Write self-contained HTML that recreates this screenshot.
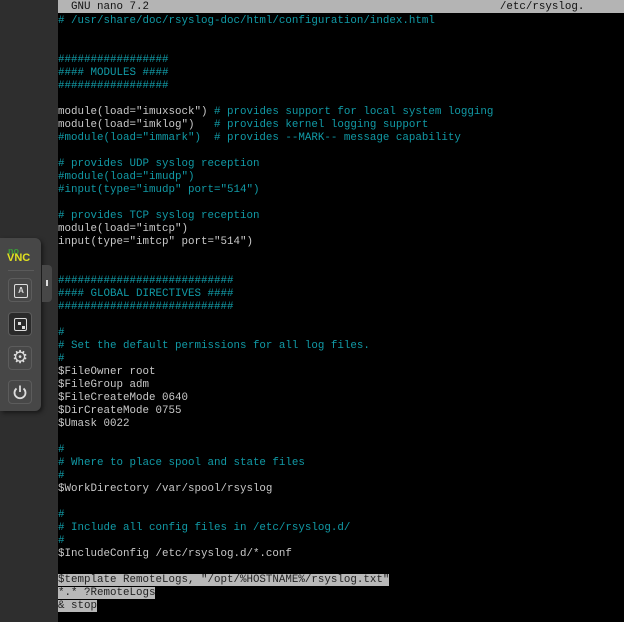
<!DOCTYPE html>
<html><head><meta charset="utf-8"><style>
html,body{margin:0;padding:0;width:624px;height:622px;overflow:hidden;background:#2e2e2e}
#term{position:absolute;left:58px;top:0;width:566px;height:622px;background:#000;}
#bar{position:absolute;left:0;top:0;width:566px;height:13px;background:#b4b4b4;color:#111;font:10.83px/14px "Liberation Mono",monospace;white-space:pre}
pre{position:absolute;left:0;top:15px;margin:0;font:10.83px/13px "Liberation Mono",monospace;color:#c9c9c9}
.c{color:#119aa6}
.h{background:#b8b8b8;color:#222}
#panel{position:absolute;left:0;top:238px;width:41px;height:173px;background:#474747;border-radius:0 6px 6px 0;box-shadow:2px 2px 4px rgba(0,0,0,.5)}
#tab{position:absolute;left:42px;top:265px;width:10px;height:37px;background:#474747;border-radius:0 4px 4px 0}
.btn{position:absolute;left:8px;width:24px;height:24px;border-radius:4px;border:1px solid #5c5c5c;box-sizing:border-box}
</style></head><body>
<div id="panel">
<div style="position:absolute;left:8px;top:9px;font:bold 9px/8px 'Liberation Sans',sans-serif;color:#3a9a3a">no</div>
<div style="position:absolute;left:7px;top:15px;font:bold 11px/10px 'Liberation Sans',sans-serif;color:#e0e020">VNC</div>
<div style="position:absolute;left:8px;top:32px;width:26px;height:1px;background:#5a5a5a"></div>
<div class="btn" style="top:40px"><div style="position:absolute;left:5px;top:5px;width:12px;height:12px;border:1.5px solid #ddd;border-radius:2px;font:bold 8px/12px 'Liberation Sans',sans-serif;color:#ddd;text-align:center">A</div></div>
<div class="btn" style="top:74px;background:#2a2a2a"><div style="position:absolute;left:5px;top:5px;width:11px;height:11px;border:1.5px solid #ddd;border-radius:2px"></div><div style="position:absolute;left:9px;top:9px;width:3px;height:3px;background:#ddd"></div><div style="position:absolute;left:13px;top:13px;width:3px;height:3px;background:#ddd"></div></div>
<div class="btn" style="top:108px"><div style="position:absolute;left:3px;top:0;width:16px;text-align:center;font:18px/22px 'DejaVu Sans',sans-serif;color:#ddd">⚙</div></div>
<div class="btn" style="top:142px"><svg width="22" height="22" style="position:absolute;left:0;top:0"><path d="M7.5 7.5A5.5 5.5 0 1 0 14.5 7.5" fill="none" stroke="#ddd" stroke-width="1.8"/><path d="M11 4.5V11" stroke="#ddd" stroke-width="1.8"/></svg></div>
</div>
<div id="tab"><div style="position:absolute;left:4px;top:15px;width:2px;height:6px;background:#ddd"></div></div>
<div id="term">
<div id="bar">  GNU nano 7.2                                                      /etc/rsyslog.</div>
<pre><span class="c"># /usr/share/doc/rsyslog-doc/html/configuration/index.html</span>


<span class="c">#################
#### MODULES ####
#################</span>

module(load="imuxsock") <span class="c"># provides support for local system logging</span>
module(load="imklog")   <span class="c"># provides kernel logging support</span>
<span class="c">#module(load="immark")  # provides --MARK-- message capability</span>

<span class="c"># provides UDP syslog reception
#module(load="imudp")
#input(type="imudp" port="514")</span>

<span class="c"># provides TCP syslog reception</span>
module(load="imtcp")
input(type="imtcp" port="514")


<span class="c">###########################
#### GLOBAL DIRECTIVES ####
###########################</span>

<span class="c">#
# Set the default permissions for all log files.
#</span>
$FileOwner root
$FileGroup adm
$FileCreateMode 0640
$DirCreateMode 0755
$Umask 0022

<span class="c">#
# Where to place spool and state files
#</span>
$WorkDirectory /var/spool/rsyslog

<span class="c">#
# Include all config files in /etc/rsyslog.d/
#</span>
$IncludeConfig /etc/rsyslog.d/*.conf

<span class="h">$template RemoteLogs, "/opt/%HOSTNAME%/rsyslog.txt"</span>
<span class="h">*.* ?RemoteLogs</span>
<span class="h">&amp; stop</span></pre>
</div>
</body></html>
